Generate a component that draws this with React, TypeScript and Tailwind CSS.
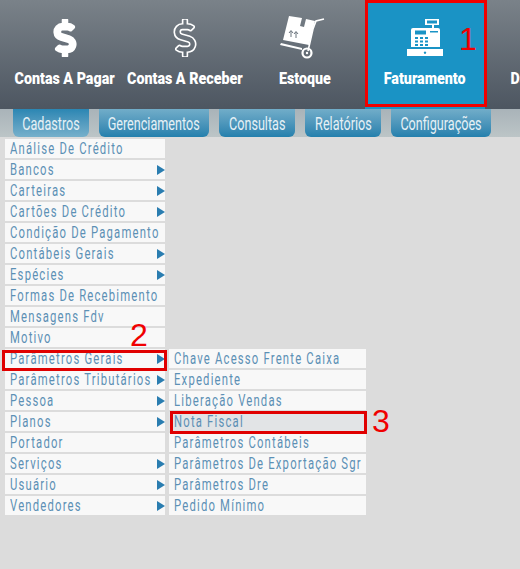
import type { ReactNode } from "react";
import { FaDollarSign } from "react-icons/fa";

const menu: [string, boolean][] = [
  ["Análise De Crédito", false],
  ["Bancos", true],
  ["Carteiras", true],
  ["Cartões De Crédito", true],
  ["Condição De Pagamento", false],
  ["Contábeis Gerais", true],
  ["Espécies", true],
  ["Formas De Recebimento", false],
  ["Mensagens Fdv", false],
  ["Motivo", false],
  ["Parâmetros Gerais", true],
  ["Parâmetros Tributários", true],
  ["Pessoa", true],
  ["Planos", true],
  ["Portador", false],
  ["Serviços", true],
  ["Usuário", true],
  ["Vendedores", true],
];

const subMenu = [
  "Chave Acesso Frente Caixa",
  "Expediente",
  "Liberação Vendas",
  "Nota Fiscal",
  "Parâmetros Contábeis",
  "Parâmetros De Exportação Sgr",
  "Parâmetros Dre",
  "Pedido Mínimo",
];

const tabs = [
  { label: "Cadastros", width: "w-[76px]" },
  { label: "Gerenciamentos", width: "w-[110px]" },
  { label: "Consultas", width: "w-[76px]" },
  { label: "Relatórios", width: "w-[76px]" },
  { label: "Configurações", width: "w-[100px]" },
];

function Boxes() {
  return (
    <svg width="50" height="46" viewBox="0 0 50 46" fill="#fff">
      <path d="M9 1 L22 3 L20 11 L24 12 L26 4 L35 6 L29 30 L3 25 Z" />
      <path d="M1 28 L22 33 L22 35 L0 30 Z" />
      <path d="M28 36 L33 14 L36 6 L44 4" fill="none" stroke="#fff" strokeWidth="1.6" />
      <circle cx="27" cy="38" r="4.5" fill="none" stroke="#fff" strokeWidth="2.2" />
      <circle cx="27" cy="38" r="1.2" />
      <path d="M11 22 V16 M9 18 L11 15.5 L13 18 M16 23 V17 M14 19 L16 16.5 L18 19" stroke="#6b747d" strokeWidth="1" fill="none" />
    </svg>
  );
}

function Register() {
  return (
    <svg width="38" height="40" viewBox="0 0 38 40" fill="#fff">
      <path d="M19 1 H33 V7 H28 V10 H26 V7 H19 Z M21 2.5 V5.5 H31 V2.5 Z" fillRule="evenodd" />
      <path fillRule="evenodd" d="M7 10 H32 Q34 10 34 12 V29 H5 V12 Q5 10 7 10 Z M9 12.5 V16.5 H20 V12.5 Z M24 13 V14.5 H32 V13 Z M9 19 V21 H12 V19 Z M14 19 V21 H17 V19 Z M19 19 V21 H22 V19 Z M9 22.5 V24.5 H12 V22.5 Z M14 22.5 V24.5 H17 V22.5 Z M19 22.5 V24.5 H22 V22.5 Z M9 26 V28 H12 V26 Z M14 26 V28 H17 V26 Z M19 26 V28 H22 V26 Z" />
      <path fillRule="evenodd" d="M1 31 H37 V38 H1 Z M19 33.5 a1.2 1.2 0 1 0 .01 0 Z" />
    </svg>
  );
}

function NavItem({ label, icon, active }: { label: string; icon: ReactNode; active?: boolean }) {
  return (
    <div className={`flex h-[109px] w-[120px] shrink-0 flex-col items-center ${active ? "bg-[#1a93c5]" : ""}`}>
      <div className="mt-[9px] flex h-[58px] items-center justify-center">{icon}</div>
      <span className="mt-[1px] shrink-0 scale-x-[0.84] whitespace-nowrap text-[17px] font-black leading-[20px] text-white">
        {label}
      </span>
    </div>
  );
}

function Arrow() {
  return <span className="h-0 w-0 shrink-0 border-y-[5px] border-l-[8px] border-y-transparent border-l-[#2a7db0]" />;
}

function MenuRow({ label, arrow, hover }: { label: string; arrow?: boolean; hover?: boolean }) {
  return (
    <div className={`flex h-[19px] items-center pl-[5px] ${hover ? "bg-[#e2e4e6]" : "bg-[#f8f8f8]"}`}>
      <div className="min-w-0 flex-1">
        <span className="inline-block origin-left scale-x-[0.705] whitespace-nowrap text-[16px] leading-[19px] tracking-[1.7px] text-[#5c90b5]">
          {label}
        </span>
      </div>
      {arrow ? <Arrow /> : null}
    </div>
  );
}

export default function App() {
  return (
    <div className="relative h-[569px] w-[520px] overflow-hidden bg-[#dcdcdc] font-['Roboto',sans-serif]">
      <div className="flex h-[109px] bg-gradient-to-b from-[#7a8289] to-[#4d5661] pl-[5px]">
        <NavItem label="Contas A Pagar" icon={<FaDollarSign size={38} color="#fff" stroke="#fff" strokeWidth={24} />} />
        <NavItem
          label="Contas A Receber"
          icon={<FaDollarSign size={38} fill="none" stroke="#fff" strokeWidth={22} />}
        />
        <NavItem label="Estoque" icon={<Boxes />} />
        <NavItem label="Faturamento" icon={<Register />} active />
        <NavItem label="Dashboard" icon={null} />
      </div>

      <div className="flex h-[28px] gap-[10px] bg-gradient-to-b from-[#a9b3b9] to-[#bcc5c7] pl-[13px]">
        {tabs.map((t, i) => (
          <div
            key={t.label}
            className={`flex h-[28px] items-center justify-center rounded-b-[6px] ${t.width} ${
              i === 0 ? "bg-gradient-to-b from-[#2a86b3] to-[#76b0cb]" : "bg-gradient-to-b from-[#71adc9] to-[#2380ad]"
            }`}
          >
            <span className="shrink-0 scale-x-[0.7] whitespace-nowrap text-[18px] text-[#e6f1f6]">{t.label}</span>
          </div>
        ))}
      </div>

      <div className="flex items-start pl-[5px] pt-[2px]">
        <div className="flex w-[160px] flex-col gap-[2px]">
          {menu.map(([label, arrow]) => (
            <MenuRow key={label} label={label} arrow={arrow} />
          ))}
        </div>
        <div className="ml-[4px] mt-[210px] flex w-[197px] flex-col gap-[2px]">
          {subMenu.map((label) => (
            <MenuRow key={label} label={label} hover={label === "Nota Fiscal"} />
          ))}
        </div>
      </div>

      {/* anotacoes em vermelho */}
      <div className="absolute left-[365px] top-0 h-[107px] w-[122px] border-[3px] border-[#f00000]" />
      <div className="absolute left-[2px] top-[350px] h-[21px] w-[165px] border-[3px] border-[#e00000]" />
      <div className="absolute left-[170px] top-[411px] h-[23px] w-[197px] border-[3px] border-[#e00000]" />
      <span className="absolute left-[459px] top-[21px] font-['Liberation_Sans',sans-serif] text-[32px] leading-[36px] text-[#f00000]">1</span>
      <span className="absolute left-[130px] top-[317px] font-['Liberation_Sans',sans-serif] text-[32px] leading-[36px] text-[#f00000]">2</span>
      <span className="absolute left-[372px] top-[403px] font-['Liberation_Sans',sans-serif] text-[32px] leading-[36px] text-[#f00000]">3</span>
    </div>
  );
}
